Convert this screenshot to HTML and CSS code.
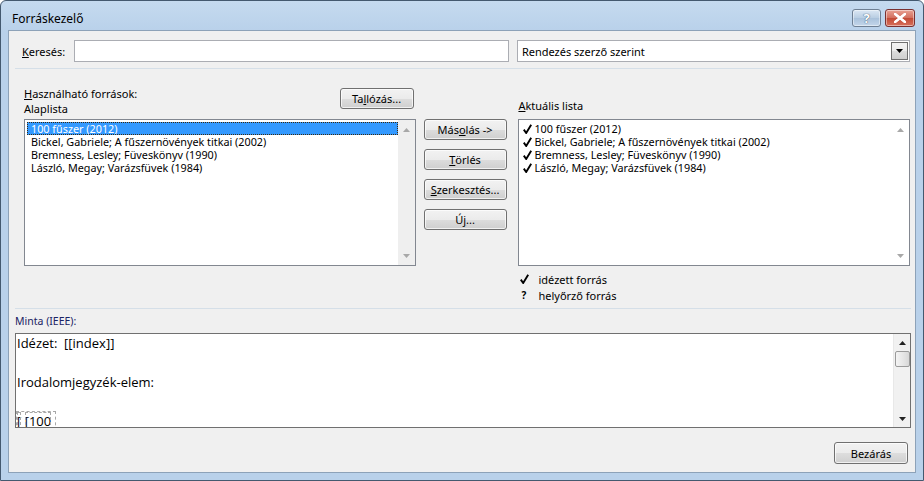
FILE: index.html
```html
<!DOCTYPE html>
<html lang="hu">
<head>
<meta charset="utf-8">
<title>Forráskezelő</title>
<link rel="stylesheet" href="styles.css">
</head>
<body>
<div class="window">
  <div class="titlebar">
    <span class="title">Forráskezelő</span>
    <div class="caption-btns">
      <div class="cbtn help"><span>?</span></div>
      <div class="cbtn close">
        <svg width="12" height="10" viewBox="0 0 12 10"><path d="M1 1 L11 9 M11 1 L1 9" stroke="#fff" stroke-width="2.6" stroke-linecap="square"/><path d="M1 1 L11 9 M11 1 L1 9" stroke="#fff" stroke-width="2"/></svg>
      </div>
    </div>
  </div>
  <div class="client">
    <div class="search-row">
      <label class="lbl search-lbl"><u>K</u>eresés:</label>
      <div class="input"></div>
      <div class="combo">
        <span class="combo-text">Rendezés szerző szerint</span>
        <div class="combo-btn"><svg width="7" height="4" viewBox="0 0 7 4"><path d="M0 0 H7 L3.5 4 Z" fill="#000"/></svg></div>
      </div>
    </div>
    <div class="sep"></div>
    <div class="lists">
      <div class="col-left">
        <div class="left-head">
          <div class="labels">
            <div class="lbl"><u>H</u>asználható források:</div>
            <div class="lbl">Alaplista</div>
          </div>
          <div class="btn browse">Ta<u>l</u>lózás...</div>
        </div>
        <div class="listbox">
          <div class="items">
            <div class="item selected">100 fűszer (2012)</div>
            <div class="item">Bickel, Gabriele; A fűszernövények titkai (2002)</div>
            <div class="item">Bremness, Lesley; Füveskönyv (1990)</div>
            <div class="item">László, Megay; Varázsfüvek (1984)</div>
          </div>
          <div class="vscroll">
            <svg class="arr" width="7" height="4" viewBox="0 0 7 4"><path d="M0 4 H7 L3.5 0 Z" fill="#a8a8a8"/></svg>
            <svg class="arr" width="7" height="4" viewBox="0 0 7 4"><path d="M0 0 H7 L3.5 4 Z" fill="#a8a8a8"/></svg>
          </div>
        </div>
      </div>
      <div class="col-mid">
        <div class="btn mid">Más<u>o</u>lás -&gt;</div>
        <div class="btn mid"><u>T</u>örlés</div>
        <div class="btn mid"><u>S</u>zerkesztés...</div>
        <div class="btn mid">Ú<u>j</u>...</div>
      </div>
      <div class="col-right">
        <div class="lbl right-lbl"><u>A</u>ktuális lista</div>
        <div class="listbox">
          <div class="items">
            <div class="item"><span class="chk"><svg width="9" height="10" viewBox="0 0 9 10"><path d="M0.8 5.6 L3.2 9 L8.2 0.8" stroke="#000" stroke-width="1.9" fill="none"/></svg></span>100 fűszer (2012)</div>
            <div class="item"><span class="chk"><svg width="9" height="10" viewBox="0 0 9 10"><path d="M0.8 5.6 L3.2 9 L8.2 0.8" stroke="#000" stroke-width="1.9" fill="none"/></svg></span>Bickel, Gabriele; A fűszernövények titkai (2002)</div>
            <div class="item"><span class="chk"><svg width="9" height="10" viewBox="0 0 9 10"><path d="M0.8 5.6 L3.2 9 L8.2 0.8" stroke="#000" stroke-width="1.9" fill="none"/></svg></span>Bremness, Lesley; Füveskönyv (1990)</div>
            <div class="item"><span class="chk"><svg width="9" height="10" viewBox="0 0 9 10"><path d="M0.8 5.6 L3.2 9 L8.2 0.8" stroke="#000" stroke-width="1.9" fill="none"/></svg></span>László, Megay; Varázsfüvek (1984)</div>
          </div>
          <div class="vscroll">
            <svg class="arr" width="7" height="4" viewBox="0 0 7 4"><path d="M0 4 H7 L3.5 0 Z" fill="#a8a8a8"/></svg>
            <svg class="arr" width="7" height="4" viewBox="0 0 7 4"><path d="M0 0 H7 L3.5 4 Z" fill="#a8a8a8"/></svg>
          </div>
        </div>
        <div class="legend">
          <div class="leg-row"><span class="leg-sym"><svg width="9" height="10" viewBox="0 0 9 10"><path d="M0.8 5.6 L3.2 9 L8.2 0.8" stroke="#000" stroke-width="1.9" fill="none"/></svg></span>idézett forrás</div>
          <div class="leg-row"><span class="leg-sym q">?</span>helyőrző forrás</div>
        </div>
      </div>
    </div>
    <div class="sep sep2"></div>
    <div class="minta-lbl">Minta (IEEE):</div>
    <div class="preview">
      <div class="preview-text">
        <p>Idézet:&nbsp; [[index]]</p>
        <p>Irodalomjegyzék-elem:</p>
        <p class="last"><span class="fld outer"><span class="fld">[</span> <span class="fld">[100</span></span></p>
      </div>
      <div class="pscroll">
        <svg width="7" height="4" viewBox="0 0 7 4"><path d="M0 4 H7 L3.5 0 Z" fill="#222"/></svg>
        <div class="thumb"></div>
        <div class="spacer"></div>
        <svg width="7" height="4" viewBox="0 0 7 4"><path d="M0 0 H7 L3.5 4 Z" fill="#222"/></svg>
      </div>
    </div>
    <div class="footer">
      <div class="btn close-btn">Bezárás</div>
    </div>
  </div>
</div>
</body>
</html>
```
FILE: styles.css
```css
* { box-sizing: border-box; }
html, body { margin: 0; padding: 0; }
body {
  width: 924px; height: 481px; overflow: hidden;
  font-family: "Noto Sans", "DejaVu Sans", sans-serif;
  font-size: 11px; color: #000; background: #fff;
}
u { text-decoration: underline; text-underline-offset: 1px; }

.window {
  width: 924px; height: 481px;
  border: 1px solid #44596f;
  border-radius: 6px 6px 0 0;
  background: linear-gradient(#c5daef, #b9d1ea 30px, #b9d1ea);
  padding: 0 7px 7px 7px;
  display: flex; flex-direction: column;
}
.titlebar {
  height: 29px; display: flex; align-items: center; justify-content: space-between;
}
.title { font-size: 12px; color: #000; padding-left: 4px; padding-top: 5px; }
.caption-btns { display: flex; gap: 4px; align-self: flex-start; margin-top: 8px; margin-right: 1px; }
.cbtn {
  height: 18px; border: 1px solid #6e7f93; border-radius: 3px;
  display: flex; align-items: center; justify-content: center;
  box-shadow: inset 0 0 0 1px rgba(255,255,255,0.45);
}
.cbtn.help { width: 29px; background: linear-gradient(#dbe7f4, #b8cde2 50%, #a9c1db 51%, #c3d6ea); }
.cbtn.help span { color: #fff; font-weight: bold; font-size: 13px; text-shadow: 0 0 1px #445a74, 0 0 1px #445a74; line-height: 1; }
.cbtn.close { width: 30px; border-color: #7a3030; background: linear-gradient(#e8a193, #d26e5d 50%, #c24a35 51%, #d7705c); }

.client {
  flex: 1; background: #f0f0f0;
  border: 1px solid #8da2b8;
  padding: 9px 5px 0 5px;
  display: flex; flex-direction: column;
}
.lbl { font-size: 11px; line-height: 15px; white-space: nowrap; }

.search-row { display: flex; align-items: center; height: 22px; }
.search-lbl { width: 60px; padding-left: 8px; }
.input { width: 436px; height: 22px; background: #fff; border: 1px solid #abadb3; margin-right: 8px; }
.combo {
  width: 394px; height: 22px; background: #fff; border: 1px solid #abadb3;
  display: flex; align-items: center; justify-content: space-between;
}
.combo-text { padding-left: 4px; font-size: 11px; }
.combo-btn {
  width: 17px; height: 18px; margin-right: 1px;
  border: 1px solid #707070;
  background: linear-gradient(#f2f2f2, #ebebeb 50%, #dddddd 51%, #cfcfcf);
  display: flex; align-items: center; justify-content: center;
}

.sep { height: 1px; background: #d5dfe8; margin: 6px 0 0 1px; width: 896px; }

.lists { display: flex; margin-top: 17px; padding-left: 10px; }
.col-left { width: 392px; display: flex; flex-direction: column; }
.left-head { display: flex; justify-content: space-between; align-items: flex-start; height: 33px; }
.btn {
  border: 1px solid #707070; border-radius: 3px;
  background: linear-gradient(#f2f2f2, #ebebeb 50%, #dddddd 51%, #cfcfcf);
  box-shadow: inset 0 0 0 1px rgba(255,255,255,0.7);
  display: flex; align-items: center; justify-content: center;
  font-size: 11px; white-space: nowrap;
}
.browse { width: 74px; height: 21px; margin-top: 2px; margin-right: 2px; }

.listbox {
  border: 1px solid #828790; background: #fff; height: 147px;
  display: flex;
}
.items { flex: 1; padding: 2px 0 0 2px; }
.item { height: 13px; line-height: 13px; font-size: 10.8px; padding-left: 4px; white-space: nowrap; }
.item.selected { background: #3399ff; color: #fff; outline: 1px dotted #3b2b10; outline-offset: -1px; }
.vscroll {
  width: 17px; background: #efefef;
  display: flex; flex-direction: column; justify-content: space-between; align-items: center;
  padding: 8px 0 7px;
}

.col-mid { width: 103px; display: flex; flex-direction: column; gap: 9px; padding: 33px 0 0 8px; }
.btn.mid { width: 83px; height: 21px; }

.col-right { width: 392px; display: flex; flex-direction: column; padding-top: 12px; }
.right-lbl { height: 21px; }
.col-right .items { padding-left: 2px; }
.col-right .item { padding-left: 2px; display: flex; align-items: center; }
.chk { width: 11px; display: inline-flex; align-items: center; }
.col-right .vscroll { background: #fff; }

.legend { padding: 5px 0 0 1px; }
.leg-row { display: flex; align-items: center; height: 16px; font-size: 11px; }
.leg-sym { width: 19px; display: inline-flex; align-items: center; padding-left: 1px; }
.leg-sym.q { font-weight: bold; font-size: 10px; padding-left: 2px; }

.sep2 { margin-top: 5px; }
.minta-lbl { font-size: 10.5px; color: #1a2364; margin: 5px 0 0 1px; line-height: 14px; }
.preview {
  margin: 5px 0 0 1px; width: 896px; height: 95px;
  border: 1px solid #707070; background: #fff; display: flex;
}
.preview-text { flex: 1; padding: 0 0 0 1px; overflow: hidden; font-family: "Open Sans", "Noto Sans", sans-serif; font-size: 13px; }
.preview-text p { margin: 0 0 20px; line-height: 19px; }
.preview-text p.last { margin: 0; }
.fld { outline: 1px dashed #a8a8a8; outline-offset: -1px; }
.fld.outer { outline-offset: 0; padding-right: 4px; }
.pscroll {
  width: 17px; background: #f1f1f1; border-left: 1px solid #e8e8e8;
  display: flex; flex-direction: column; align-items: center; padding: 7px 0 6px;
}
.thumb {
  width: 15px; height: 16px; margin-top: 6px;
  border: 1px solid #9a9a9a; border-radius: 2px;
  background: linear-gradient(90deg, #f4f4f4, #e4e4e4 60%, #d7d7d7);
}
.spacer { flex: 1; }
.footer { display: flex; justify-content: flex-end; padding: 14px 2px 0 0; }
.close-btn { width: 74px; height: 22px; }
```
